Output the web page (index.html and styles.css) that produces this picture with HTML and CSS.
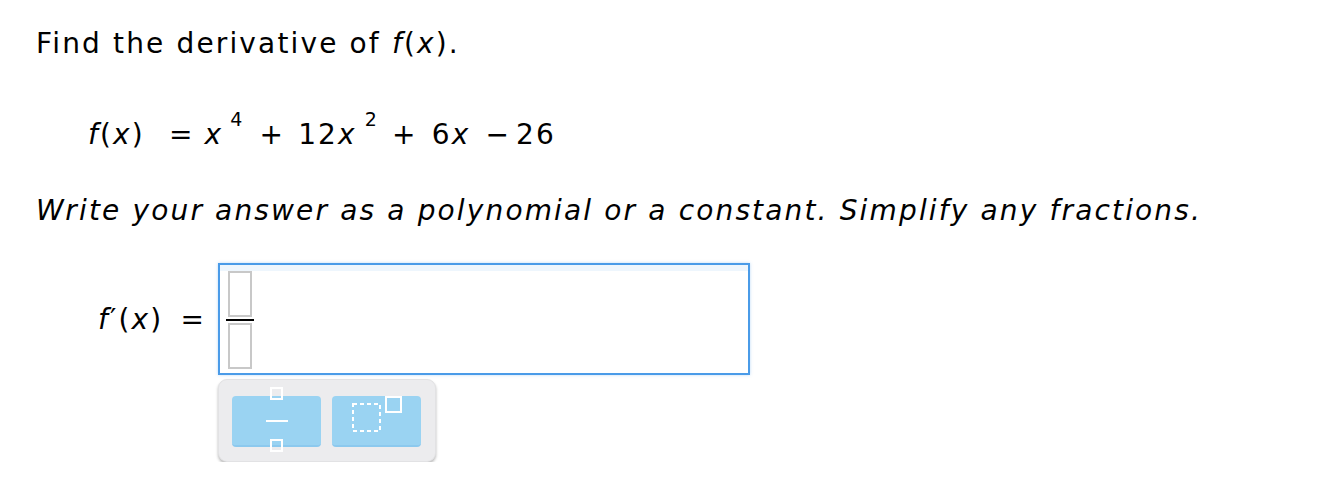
FILE: index.html
```html
<!DOCTYPE html>
<html>
<head>
<meta charset="utf-8">
<link rel="stylesheet" href="styles.css">
</head>
<body>
<div class="page">
  <p class="prompt">Find the derivative of <i>f</i>(<i>x</i>).</p>
  <div class="equation">
    <span class="fn"><i>f</i>(<i>x</i>)</span>
    <span class="op eq">=</span>
    <span class="term"><i>x</i><sup class="s1">4</sup></span>
    <span class="op p1">+</span>
    <span class="term">12<i>x</i><sup class="s2">2</sup></span>
    <span class="op p2">+</span>
    <span class="term">6<i>x</i></span>
    <span class="op minus">−</span>
    <span class="term">26</span>
  </div>
  <p class="instr">Write your answer as a polynomial or a constant. Simplify any fractions.</p>
  <div class="answer">
    <span class="lbl"><i>f</i>′(<i>x</i>)</span>
    <span class="eq2">=</span>
    <div class="inputcol">
      <div class="inputbox">
        <div class="strip"></div>
        <div class="frac">
          <div class="slot"></div>
          <div class="bar"></div>
          <div class="slot"></div>
        </div>
      </div>
      <div class="toolbar">
        <div class="btn">
          <svg width="90" height="70" viewBox="0 0 90 70">
            <rect x="39" y="1" width="11" height="11" fill="none" stroke="#fff" stroke-width="2"/>
            <rect x="34" y="33" width="22" height="2" fill="#fff"/>
            <rect x="39" y="53" width="11" height="11" fill="none" stroke="#fff" stroke-width="2"/>
          </svg>
        </div>
        <div class="btn">
          <svg width="90" height="70" viewBox="0 0 90 70">
            <rect x="21" y="17" width="27" height="27" fill="none" stroke="#fff" stroke-width="2" stroke-dasharray="4 3"/>
            <rect x="54" y="10" width="15" height="15" fill="#9ad3f2" stroke="#fff" stroke-width="2"/>
          </svg>
        </div>
      </div>
    </div>
  </div>
</div>
</body>
</html>
```
FILE: styles.css
```css
html, body {
  margin: 0;
  padding: 0;
  background: #fff;
}
body {
  font-family: "DejaVu Sans", Verdana, sans-serif;
  color: #000;
  letter-spacing: 2.15px;
}
.page {
  padding: 26px 0 0 36px;
}
.prompt {
  margin: 0;
  font-size: 28px;
  line-height: 36px;
}
.equation {
  display: flex;
  align-items: baseline;
  margin: 55px 0 0 52px;
  font-size: 28px;
  line-height: 36px;
}
.equation .op {
  margin: 0 13px 0 17px;
}
.equation .eq {
  margin: 0 10px 0 24px;
}
.equation .p1 {
  margin: 0 13px 0 15px;
}
.equation .p2 {
  margin: 0 14px 0 13px;
}
.equation .minus {
  margin: 0 5px 0 15px;
}
sup {
  font-size: 19px;
  line-height: 0;
  vertical-align: 0;
  position: relative;
  top: -18px;
}
.s1 {
  margin-left: 7px;
}
.s2 {
  margin-left: 8px;
}
.instr {
  margin: 40px 0 0 0;
  font-size: 28px;
  line-height: 36px;
  font-style: italic;
}
.answer {
  display: flex;
  align-items: flex-start;
  margin: 34px 0 0 62px;
}
.lbl {
  font-size: 28px;
  line-height: 36px;
  margin-top: 39px;
}
.eq2 {
  font-size: 28px;
  line-height: 36px;
  margin: 39px 12px 0 17px;
}
.inputcol {
  display: flex;
  flex-direction: column;
  align-items: flex-start;
}
.inputbox {
  position: relative;
  width: 528px;
  height: 108px;
  border: 2px solid #4a9be8;
  box-shadow: 0 0 3px rgba(74,155,232,0.35);
  background: #fff;
}
.strip {
  position: absolute;
  left: 0;
  right: 0;
  top: 0;
  height: 6px;
  background: #eef6fd;
}
.frac {
  position: relative;
  display: flex;
  flex-direction: column;
  align-items: flex-start;
  width: 28px;
  margin: 6px 0 0 6px;
}
.slot {
  width: 24px;
  height: 46px;
  margin-left: 2px;
  border: 2px solid #c8c8c8;
  box-sizing: border-box;
  background: #fff;
}
.bar {
  width: 28px;
  height: 2px;
  background: #000;
  margin: 2px 0;
}
.toolbar {
  display: flex;
  gap: 11px;
  margin-top: 4px;
  padding: 16px 14px 14px 13px;
  background: #ececee;
  border-radius: 9px;
  border: 1px solid #e2e2e4;
  box-shadow: 0 2px 3px rgba(0,0,0,0.28);
}
.btn {
  width: 89px;
  height: 51px;
  background: #9ad3f2;
  border-radius: 4px;
  border-bottom: 2px solid #8cc9ee;
  box-sizing: border-box;
  position: relative;
}
.btn svg {
  position: absolute;
  left: 0;
  top: -9px;
}
```
